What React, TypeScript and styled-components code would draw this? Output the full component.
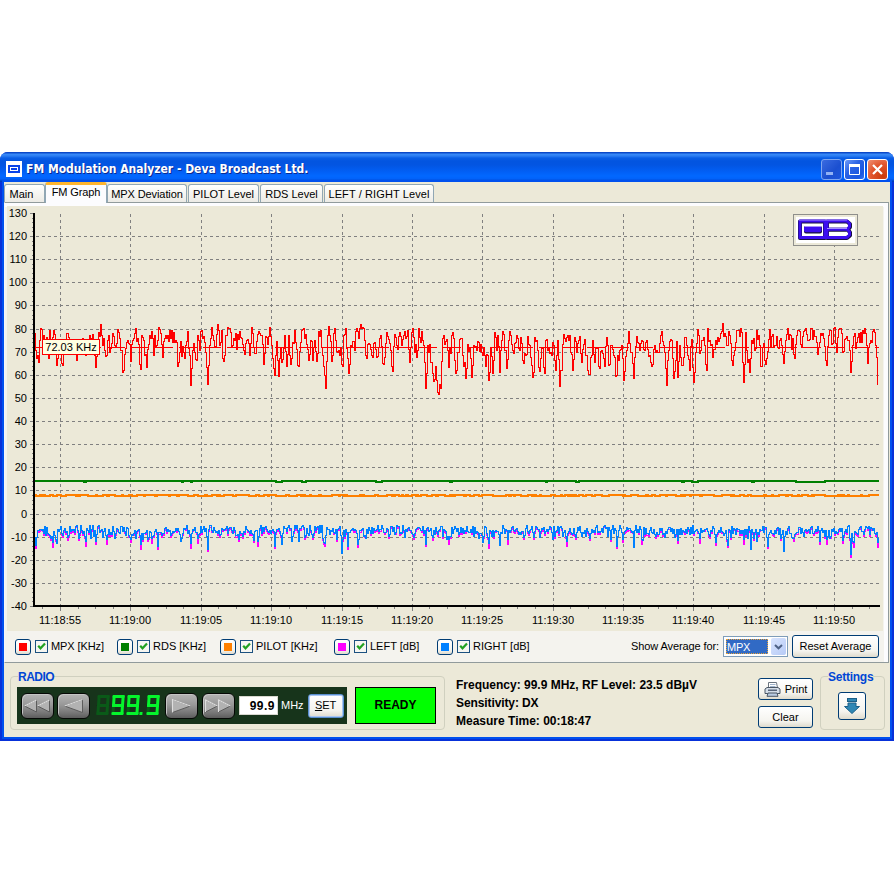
import React from "react";
import styled, { createGlobalStyle, css } from "styled-components";

const SANS = '"Liberation Sans", Arial, sans-serif';

const Global = createGlobalStyle`
  * { box-sizing: border-box; }
  body { margin: 0; background: #fff; font: 11px/13px ${SANS}; color: #000; cursor: default; }
  button { font: inherit; color: #000; padding: 0; margin: 0; }
`;

/* ---------- window frame ---------- */

const Page = styled.main`
  width: 894px;
  height: 894px;
  padding-top: 152px;
  overflow: hidden;
`;

const Window = styled.section`
  width: 894px;
  height: 589px;
  display: flex;
  flex-direction: column;
  border-radius: 8px 8px 0 0;
  overflow: hidden;
  background: #0831d9;
`;

const TitleBar = styled.header`
  height: 30px;
  flex: none;
  display: flex;
  align-items: center;
  padding: 4px 6px 0 6px;
  background: linear-gradient(
    #0a48c8 0, #0a48c8 1px, #3a8bf8 2px, #2a7cf2 4px, #0a5ee6 6px, #0355e0 9px,
    #0355e2 13px, #0260f6 20px, #0268ff 24px, #0262fa 27px, #0140c4 29px, #0038b0 30px
  );
`;

const AppIcon = styled.svg`
  display: block;
  width: 16px;
  height: 16px;
  margin-right: 4px;
`;

const Title = styled.h1`
  margin: 0;
  flex: 1;
  font: bold 12px/16px "DejaVu Sans Condensed", "DejaVu Sans", sans-serif;
  letter-spacing: 0;
  color: #fff;
  text-shadow: 1px 1px 0 #0a2a90;
  white-space: nowrap;
`;

const CaptionButtons = styled.div`
  display: flex;
  gap: 2px;
`;

const CaptionButton = styled.button<{ $kind: "dim" | "normal" | "close" }>`
  width: 21px;
  height: 21px;
  display: grid;
  place-items: center;
  border-radius: 3px;
  border: 1px solid ${(p) => (p.$kind === "dim" ? "#7fa6f0" : "#fff")};
  background: ${(p) =>
    p.$kind === "close"
      ? "radial-gradient(circle at 80% 85%, #c93a0c, #e2562f 55%, #ef9276)"
      : p.$kind === "dim"
        ? "linear-gradient(135deg, #3a6be0, #1b4fd0 60%, #1c56de)"
        : "linear-gradient(135deg, #6f9cf8, #2a62e4 40%, #1a56e0 80%, #2f76f6)"};
`;

const Client = styled.div`
  flex: 1;
  margin: 0 4px 4px;
  display: flex;
  flex-direction: column;
  background: #ece9d8;
  box-shadow: 0 0 0 2px #0050ee;
`;

/* ---------- tabs ---------- */

const TabStrip = styled.nav`
  height: 20px;
  flex: none;
  display: flex;
  align-items: flex-end;
`;

const Tab = styled.div<{ $w: number; $ls: number; $gap?: number; $active?: boolean }>`
  width: ${(p) => p.$w}px;
  height: 18px;
  margin-left: ${(p) => p.$gap || 0}px;
  padding-top: 3px;
  text-align: center;
  white-space: nowrap;
  letter-spacing: ${(p) => p.$ls}px;
  border: 1px solid #91a7b4;
  border-bottom: 0;
  border-radius: 3px 3px 0 0;
  background: linear-gradient(#fff, #f4f3ee 60%, #ecebe6);
  ${(p) =>
    p.$active &&
    css`
      height: 21px;
      margin-bottom: -1px;
      z-index: 1;
      padding-top: 1px;
      border-top: 3px solid #ffb52e;
      background: #fcfcfe;
    `}
`;

const TabPanel = styled.div`
  width: 885px;
  height: 461px;
  flex: none;
  padding: 3px 3px 0 2px;
  border: 1px solid #919b9c;
  border-left-color: #f4f6fa;
  background: #f4f3ee;
  box-shadow: inset 0 4px 0 #fcfcfe, inset -4px 0 0 #fcfcfe;
`;

/* ---------- chart ---------- */

const ChartArea = styled.div`
  position: relative;
  width: 876px;
  height: 425px;
  background: #ece9d8;
`;

const ChartSvg = styled.svg`
  display: block;
  width: 876px;
  height: 425px;
  font: 11px ${SANS};
`;

const ValueTip = styled.div`
  position: absolute;
  left: 35px;
  top: 133px;
  width: 58px;
  height: 16px;
  border: 1px solid #f00;
  background: #ffffe1;
  text-align: center;
  line-height: 15px;
  white-space: nowrap;
`;

const LogoBox = styled.div`
  position: absolute;
  left: 786px;
  top: 8px;
  width: 65px;
  height: 32px;
  border: 1px solid #8f8f8b;
  padding: 2px;
  background: #ece9d8;
`;

const LogoSvg = styled.svg`
  display: block;
  width: 59px;
  height: 26px;
  background: #fff;
`;

/* ---------- legend ---------- */

const LegendRow = styled.div`
  height: 31px;
  display: flex;
  align-items: center;
  padding-left: 8px;
`;

const LegendItem = styled.div<{ $w: number }>`
  width: ${(p) => p.$w}px;
  display: flex;
  align-items: center;
`;

const XpButton = styled.button<{ $w: number; $h: number; $ls?: number }>`
  width: ${(p) => p.$w}px;
  height: ${(p) => p.$h}px;
  flex: none;
  display: flex;
  align-items: center;
  justify-content: center;
  border: 1px solid #003c74;
  border-radius: 3px;
  background: linear-gradient(#fff, #f5f4ef 70%, #dfdbcd);
  letter-spacing: ${(p) => p.$ls || 0}px;
  white-space: nowrap;
`;

const SetButton = styled(XpButton)`
  margin-left: 4px;
  border-color: #5a8fd0;
  box-shadow: inset 0 0 0 1px #a8c6f2;
`;

const Swatch = styled.span<{ $c: string }>`
  width: 8px;
  height: 8px;
  background: ${(p) => p.$c};
`;

const CheckBox = styled.svg`
  display: block;
  width: 13px;
  height: 13px;
  margin: 0 3px 0 4px;
`;

const Label = styled.span<{ $ls?: number }>`
  letter-spacing: ${(p) => p.$ls || 0}px;
  white-space: nowrap;
`;

const AverageTools = styled.div`
  margin-left: auto;
  margin-right: 6px;
  display: flex;
  align-items: center;
`;

const Select = styled.div`
  width: 65px;
  height: 21px;
  margin: 0 4px;
  display: flex;
  align-items: stretch;
  border: 1px solid #7f9db9;
  background: #fff;
  padding: 1px;
`;

const SelectValue = styled.span`
  flex: 1;
  margin: 1px 3px 1px 1px;
  background: #316ac5;
  outline: 1px dotted #e8a33a;
  outline-offset: -1px;
  color: #fff;
  line-height: 16px;
  padding-left: 1px;
  letter-spacing: -0.2px;
`;

const SelectArrow = styled.span`
  width: 15px;
  display: grid;
  place-items: center;
  border-radius: 2px;
  background: linear-gradient(135deg, #d8e4fe, #b6caf6);
`;

/* ---------- bottom area ---------- */

const Footer = styled.div`
  flex: 1;
  display: flex;
  padding: 13px 5px 0 6px;
`;

const Group = styled.fieldset<{ $w: number }>`
  width: ${(p) => p.$w}px;
  height: 54px;
  flex: none;
  margin: 0;
  padding: 8px 0 0 6px;
  min-width: 0;
  border: 1px solid #d0d0bf;
  border-radius: 4px;
`;

const GroupTitle = styled.div<{ $ls: number }>`
  width: max-content;
  height: 12px;
  margin: -15px 0 5px 1px;
  background: #ece9d8;
  color: #0046d5;
  font-weight: bold;
  font-size: 12px;
  line-height: 14px;
  letter-spacing: ${(p) => p.$ls}px;
`;

const GroupRow = styled.div<{ $center?: boolean }>`
  display: flex;
  gap: 8px;
  ${(p) => p.$center && "padding: 5px 0 0 11px;"}
`;

const RadioPanel = styled.div`
  width: 330px;
  height: 37px;
  display: flex;
  align-items: center;
  padding-left: 4px;
  background: #17341b;
  color: #fff;
`;

const SeekButton = styled.button<{ $ml: number }>`
  width: 33px;
  height: 26px;
  flex: none;
  margin-left: ${(p) => p.$ml}px;
  padding: 0;
  display: grid;
  place-items: center;
  border: 1px solid #050805;
  border-radius: 6px;
  background: linear-gradient(#b4b4b4, #989898 45%, #757575 80%, #5c5c5c);
  box-shadow: inset 1px 1px 0 #c4c4c4;
`;

const Lcd = styled.div`
  width: 64px;
  height: 21px;
  flex: none;
  margin-left: 7px;
  display: flex;
  transform: skewX(-4deg);
`;

const Digit = styled.div<{ $mr: number }>`
  width: 12px;
  height: 20px;
  flex: none;
  margin-right: ${(p) => p.$mr}px;
  display: grid;
  grid-template-columns: 3px 1fr 3px;
  grid-template-rows: 3px 1fr 3px 1fr 3px;
`;

const Segment = styled.i<{ $area: string; $on: boolean }>`
  grid-area: ${(p) => p.$area};
  border-radius: 1px;
  background: ${(p) => (p.$on ? "#05f52c" : "#0a5a18")};
`;

const LcdDot = styled.i`
  width: 3px;
  height: 3px;
  flex: none;
  margin: 17px 4px 0 0;
  background: #05f52c;
`;

const FreqInput = styled.div`
  width: 39px;
  height: 19px;
  flex: none;
  margin: 0 3px 0 4px;
  padding-right: 2px;
  background: #fff;
  border: 1px solid #d8d8d0;
  color: #000;
  font-weight: bold;
  font-size: 12px;
  line-height: 18px;
  text-align: right;
  letter-spacing: 0.5px;
`;

const Ready = styled.div`
  width: 81px;
  height: 37px;
  border: 1px solid #000;
  background: #00ff00;
  font-weight: bold;
  font-size: 12px;
  line-height: 35px;
  text-align: center;
`;

const Info = styled.div`
  width: 313px;
  flex: none;
  padding-left: 11px;
  font-weight: bold;
  font-size: 12px;
  line-height: 18px;
`;

const InfoLine = styled.div<{ $ls: number }>`
  letter-spacing: ${(p) => p.$ls}px;
  white-space: nowrap;
`;

const ButtonStack = styled.div`
  display: flex;
  flex-direction: column;
  gap: 6px;
  padding-top: 2px;
  margin-right: 7px;
`;

const PrinterIcon = styled.svg`
  width: 17px;
  height: 16px;
  margin-right: 4px;
`;

/* ---------- series data ---------- */

type Pt = [number, number];

function noise(seed: number) {
  let s = seed;
  return () => {
    s = (s * 1664525 + 1013904223) >>> 0;
    return s / 4294967296;
  };
}

const MPX = `35,333 36,350 37,358 39,362 40,340 42,329 44,335 45,351 48,342 49,358 50,330 52,343 54,330 57,365 59,345 61,352 63,365 65,340 68,333 70,345 73,352 75,345 77,360 79,340 82,352 83,338 86,355 88,345 91,338 93,334 95,355 96,367 98,345 99,332 100,336 101,324 102,335 104,338 106,356 108,340 109,335 110,352 112,343 114,336 117,343 119,332 121,350 124,370 126,348 128,340 130,344 131,361 133,340 136,328 138,338 141,369 142,335 144,340 147,367 150,335 152,331 154,355 155,335 157,345 159,327 161,333 163,357 165,338 168,335 171,338 174,332 177,342 178,366 180,352 183,346 185,358 186,345 188,331 190,355 191,385 193,350 195,352 197,360 198,335 200,350 202,330 204,336 206,352 208,384 210,345 212,327 214,340 216,346 218,324 220,345 222,330 223,358 225,355 226,335 228,327 231,332 233,345 236,333 237,349 240,331 243,344 245,354 247,340 250,355 252,327 254,347 256,353 259,331 262,335 264,364 266,336 268,344 270,327 272,345 275,375 277,341 279,376 281,347 282,362 285,335 287,366 289,335 291,364 293,342 295,330 297,349 299,366 301,342 303,329 305,338 308,349 309,360 311,340 313,360 315,340 317,361 319,331 321,330 322,347 324,366 326,388 328,335 329,326 330,335 332,361 334,333 336,340 339,350 341,347 343,366 344,335 346,328 347,348 349,373 351,345 353,341 355,350 357,328 359,338 361,324 363,327 365,340 366,355 367,358 369,343 372,355 375,342 378,356 381,335 383,363 386,343 388,336 391,350 393,371 395,334 397,345 400,332 402,345 404,335 406,338 408,330 410,362 412,332 414,337 417,357 419,328 420,337 423,340 425,362 426,388 428,345 430,344 432,362 434,381 436,366 437,380 439,394 441,388 443,338 444,335 446,341 448,350 449,367 452,335 454,338 455,360 457,370 459,352 461,338 463,355 465,362 466,378 468,344 470,347 472,377 474,345 477,350 479,342 482,352 484,348 486,366 488,355 489,380 491,347 493,373 495,332 497,350 498,335 500,372 502,340 504,334 507,368 509,340 511,335 513,350 516,342 518,338 520,350 521,337 524,363 526,355 528,336 530,345 532,365 534,372 535,337 538,350 540,371 542,347 545,373 546,340 548,350 551,352 553,342 556,370 558,340 560,386 562,370 564,334 565,338 567,337 570,335 573,370 575,337 577,352 580,336 582,362 584,344 587,355 590,374 593,340 595,362 597,348 600,368 602,350 605,366 607,337 609,365 611,345 614,355 617,375 618,355 622,345 624,380 627,350 629,331 631,352 634,378 637,336 640,350 642,340 645,350 647,340 650,355 652,366 655,345 657,350 659,352 661,335 664,345 666,368 667,385 669,350 672,340 674,378 677,341 678,377 680,345 683,365 685,337 687,345 690,370 692,339 694,382 696,352 698,329 700,353 703,340 705,345 707,370 708,328 710,340 713,357 716,340 719,341 721,333 723,323 725,333 728,345 730,335 732,360 735,350 738,330 740,336 742,332 744,382 746,332 748,362 750,372 752,340 755,350 757,330 760,345 761,366 764,343 765,360 769,339 772,336 775,345 780,340 784,363 786,340 788,328 791,335 795,358 797,335 798,330 802,347 804,331 807,334 810,339 814,330 818,354 820,342 823,333 825,346 827,365 829,335 831,330 833,343 835,327 837,352 839,329 841,328 843,352 846,338 849,340 851,372 854,336 857,342 860,342 863,330 865,328 868,363 871,340 875,332 876,345 878,384`
  .split(" ")
  .map((p) => p.split(",").map(Number) as Pt);

/* One vertical run per pixel column, each joining the previous level. */
function columns(levels: number[]): string {
  let d = "";
  for (let i = 1; i < levels.length; i++) {
    const a = levels[i - 1];
    const b = levels[i];
    const x = 35.5 + i - 1;
    d += b >= a ? `M${x} ${a}V${b + 1}` : `M${x} ${b}V${a + 1}`;
  }
  return d;
}

function densify(points: Pt[], seed: number, amp: number): string {
  const rnd = noise(seed);
  const out: number[] = [];
  for (let i = 0; i < points.length - 1; i++) {
    const [x0, y0] = points[i];
    const [x1, y1] = points[i + 1];
    out.push(y0);
    for (let x = x0 + 1; x < x1; x++) {
      const t = (x - x0) / (x1 - x0);
      const y = y0 + (y1 - y0) * t + (rnd() - 0.5) * amp;
      out.push(Math.round(Math.max(y, 328)));
    }
  }
  out.push(points[points.length - 1][1]);
  return columns(out);
}

const DIPS: Pt[] = [
  [36, 545], [51, 538], [53, 542], [57, 543], [68, 537], [79, 538], [86, 541], [96, 541], [107, 539], [115, 538], [131, 539],
  [141, 544], [152, 538], [158, 546], [181, 541], [191, 543], [198, 538], [208, 549], [236, 535], [254, 540], [258, 541],
  [275, 546], [282, 544], [292, 541], [299, 541], [313, 537], [325, 543], [342, 553], [348, 546], [358, 544], [366, 538],
  [414, 537], [426, 544], [433, 537], [449, 539], [483, 542], [489, 543], [500, 545], [508, 539], [524, 537], [540, 537],
  [567, 541], [576, 537], [590, 538], [611, 539], [617, 546], [623, 539], [634, 547], [642, 539], [665, 537], [678, 540],
  [700, 538], [716, 542], [728, 545], [744, 539], [751, 549], [757, 541], [768, 546], [784, 551], [794, 538], [820, 541],
  [827, 539], [843, 540], [851, 554], [854, 542], [878, 542],
];

function audioLevels(): { right: number[]; left: number[] } {
  const rnd = noise(4242);
  const dips = new Map(DIPS);
  const right: number[] = [];
  const left: number[] = [];
  for (let x = 35; x <= 879; x++) {
    let y = 529.5 + Math.sin(x / 17) * 0.7 + (rnd() - 0.5) * 9;
    if (rnd() > 0.85) y += 3 + rnd() * 3;
    if (dips.has(x)) y = dips.get(x)!;
    else if (dips.has(x + 1) || dips.has(x - 1)) y += 3;
    const level = Math.round(Math.max(y, 525));
    right.push(level);
    left.push(level + (rnd() > 0.5 ? 2 : 0) + (dips.has(x) && rnd() > 0.55 ? 3 : 0));
  }
  return { right, left };
}

const AUDIO = audioLevels();

function steps(y: number, lows: [number, number][]): string {
  let d = `M35 ${y}`;
  lows.forEach(([a, b]) => {
    d += `H${a}V${y + 1}H${b}V${y}`;
  });
  return d + "H879";
}

function pilotSteps(): string {
  const rnd = noise(77);
  let d = "M35 495";
  let x = 35;
  let low = false;
  while (x < 866) {
    x += 1 + Math.floor(rnd() * rnd() * 14);
    low = !low;
    d += `H${x}V${low ? 496 : 495}`;
  }
  return d + "H879";
}

const RDS_LOWS: [number, number][] = [
  [84, 86], [182, 183], [191, 192], [276, 282], [302, 306], [376, 382], [450, 452], [546, 547], [576, 579], [682, 684], [692, 698], [752, 754], [796, 825],
];

const Y_TICKS = [213, 236, 259, 282, 305, 329, 352, 375, 398, 421, 444, 467, 490, 514, 537, 560, 583, 606];
const X_TICKS = [60, 130, 201, 271, 342, 412, 482, 553, 623, 693, 764, 834];
const X_LABELS = ["11:18:55", "11:19:00", "11:19:05", "11:19:10", "11:19:15", "11:19:20", "11:19:25", "11:19:30", "11:19:35", "11:19:40", "11:19:45", "11:19:50"];

function Chart() {
  const minorY: number[] = [];
  for (let i = 0; i < 17; i++) for (let k = 1; k < 5; k++) minorY.push(Math.round(213 + i * 23.12 + k * 4.62));
  const minorX: number[] = [];
  for (let i = -1; i < 12; i++) for (let k = 1; k < 4; k++) {
    const x = Math.round(60 + i * 70.36 + k * 17.6);
    if (x > 37 && x < 878) minorX.push(x);
  }
  return (
    <ChartSvg viewBox="7 206 876 425">
      <g shapeRendering="crispEdges" fill="none">
        <g stroke="#808080" strokeDasharray="3 3">
          {Y_TICKS.slice(1, -1).map((y) => <path key={y} d={`M36 ${y + 0.5}H879`} />)}
          {X_TICKS.map((x) => <path key={x} d={`M${x + 0.5} 214V605`} />)}
        </g>
        <g stroke="#808080">
          {Y_TICKS.map((y) => <path key={y} d={`M30 ${y + 0.5}H34`} />)}
          {minorY.map((y) => <path key={y} d={`M32 ${y + 0.5}H34`} />)}
          {X_TICKS.map((x) => <path key={x} d={`M${x + 0.5} 607V611`} />)}
          {minorX.map((x) => <path key={x} d={`M${x + 0.5} 607V609`} />)}
        </g>
        <path d="M34 213V607M33 606H880" stroke="#000" strokeWidth="2" />
        <path d={steps(481, RDS_LOWS)} stroke="#008000" strokeWidth="2" />
        <path d={pilotSteps()} stroke="#ff8000" strokeWidth="2" />
        <path d={columns(AUDIO.left)} stroke="#ff00ff" />
        <path d={columns(AUDIO.right)} stroke="#0080ff" />
        <path d="M35 347.5H879" stroke="#f00" strokeDasharray="18 6" />
        <path d={densify(MPX, 19, 18)} stroke="#f00" />
      </g>
      <g fill="#000">
        {Y_TICKS.map((y, i) => <text key={y} x="27" y={y + 4} textAnchor="end">{130 - i * 10}</text>)}
        {X_TICKS.map((x, i) => <text key={x} x={x} y="624" textAnchor="middle" textLength="42">{X_LABELS[i]}</text>)}
      </g>
    </ChartSvg>
  );
}

function Logo() {
  return (
    <LogoSvg viewBox="0 0 59 26">
      <g fill="none" strokeLinejoin="round">
        <path d="M4 4.5H29V21H4ZM31 4.5H51L54 7V10L52 12.8L54 15.5V18.5L51 21H31ZM31 12.8H52" stroke="#17103c" strokeWidth="4" />
        <path d="M4 4H29V20.5H4ZM31 4H51L53.5 6.5V9.7L51.5 12.3L53.5 15V18L51 20.5H31ZM31 12.3H51" stroke="#3c0cf0" strokeWidth="3" />
        <path d="M3 3H51M31 11.5H51" stroke="#a48cff" strokeWidth="1" />
      </g>
      <rect x="8" y="9" width="18" height="7.5" rx="2" fill="#17103c" />
      <rect x="8" y="9" width="17.5" height="6.3" rx="2" fill="#3c0cf0" />
      <path d="M9 9.5H25" stroke="#a48cff" />
    </LogoSvg>
  );
}

const Check = () => (
  <CheckBox viewBox="0 0 13 13">
    <rect x="0.5" y="0.5" width="12" height="12" fill="#f6f6f2" stroke="#1c5180" />
    <path d="M3.2 5.8L5.5 8.3L10 3.6" fill="none" stroke="#21a121" strokeWidth="2.2" />
  </CheckBox>
);

function Seek({ dir, double, ml }: { dir: 1 | -1; double?: boolean; ml: number }) {
  const offsets = double ? [-7, 6] : [0];
  const half = double ? 6 : 9;
  const h = double ? 6 : 6.5;
  return (
    <SeekButton $ml={ml}>
      <svg width="29" height="16" viewBox="-14.5 -8 29 16">
        {offsets.map((o) => (
          <g key={o}>
            <path d={`M${o - dir * half} ${-h}L${o + dir * half} 0L${o - dir * half} ${h}Z`} fill="#b2b2b2" stroke="#5c5c5c" strokeWidth="1" />
            <path d={dir > 0 ? `M${o - half} ${h}V${-h}L${o + half} 0` : `M${o - half} 0L${o + half} ${-h}`} fill="none" stroke="#dedede" strokeWidth="1.1" />
          </g>
        ))}
      </svg>
    </SeekButton>
  );
}

const SEGMENTS: [string, string][] = [
  ["a", "1 / 1 / 2 / 4"], ["f", "1 / 1 / 4 / 2"], ["b", "1 / 3 / 4 / 4"], ["g", "3 / 1 / 4 / 4"],
  ["c", "3 / 3 / 6 / 4"], ["e", "3 / 1 / 6 / 2"], ["d", "5 / 1 / 6 / 4"],
];

function LcdDigit({ lit, mr }: { lit: string; mr: number }) {
  const ordered = [...SEGMENTS].sort((p, q) => Number(lit.includes(p[0])) - Number(lit.includes(q[0])));
  return (
    <Digit $mr={mr}>
      {ordered.map(([id, area]) => <Segment key={id} $area={area} $on={lit.includes(id)} />)}
    </Digit>
  );
}

const LEGEND = [
  { label: "MPX [KHz]", color: "#ff0000", w: 102, ls: -0.1 },
  { label: "RDS [KHz]", color: "#008000", w: 103, ls: 0 },
  { label: "PILOT [KHz]", color: "#ff8000", w: 114, ls: 0 },
  { label: "LEFT [dB]", color: "#ff00ff", w: 103, ls: 0 },
  { label: "RIGHT [dB]", color: "#0080ff", w: 100, ls: 0 },
];

export default function App() {
  return (
    <Page>
      <Global />
      <Window>
        <TitleBar>
          <AppIcon viewBox="0 0 16 16" shapeRendering="crispEdges">
            <rect width="16" height="16" fill="#fff" />
            <rect x="2" y="4" width="12" height="8" fill="#0a44e8" />
            <rect x="4" y="6" width="8" height="4" fill="#fff" />
            <rect x="5" y="7" width="6" height="2" fill="#0a44e8" />
          </AppIcon>
          <Title>FM Modulation Analyzer - Deva Broadcast Ltd.</Title>
          <CaptionButtons>
            <CaptionButton $kind="dim">
              <svg width="19" height="19"><rect x="4" y="12" width="7" height="3" fill="#92b2f4" /></svg>
            </CaptionButton>
            <CaptionButton $kind="normal">
              <svg width="19" height="19"><path d="M4 5.5H15M4.5 5V14.5H14.5V5" fill="none" stroke="#fff" /><rect x="4" y="4" width="11" height="3" fill="#fff" /></svg>
            </CaptionButton>
            <CaptionButton $kind="close">
              <svg width="19" height="19"><path d="M5 5L14 14M14 5L5 14" stroke="#fff" strokeWidth="2.2" /></svg>
            </CaptionButton>
          </CaptionButtons>
        </TitleBar>

        <Client>
          <TabStrip>
            <Tab $w={41} $ls={0}>Main&nbsp;&nbsp;</Tab>
            <Tab $w={62} $ls={-0.1} $active>FM Graph</Tab>
            <Tab $w={80} $ls={-0.1}>MPX Deviation</Tab>
            <Tab $w={71} $gap={1} $ls={0}>PILOT Level</Tab>
            <Tab $w={63} $gap={1} $ls={0}>RDS Level</Tab>
            <Tab $w={110} $gap={1} $ls={0.1}>LEFT / RIGHT Level</Tab>
          </TabStrip>

          <TabPanel>
            <ChartArea>
              <Chart />
              <ValueTip>72.03 KHz</ValueTip>
              <LogoBox><Logo /></LogoBox>
            </ChartArea>
            <LegendRow>
              {LEGEND.map((s) => (
                <LegendItem key={s.label} $w={s.w}>
                  <XpButton $w={16} $h={16}><Swatch $c={s.color} /></XpButton>
                  <Check />
                  <Label $ls={s.ls}>{s.label}</Label>
                </LegendItem>
              ))}
              <AverageTools>
                <Label $ls={-0.1}>Show Average for:</Label>
                <Select>
                  <SelectValue>MPX</SelectValue>
                  <SelectArrow>
                    <svg width="9" height="6"><path d="M1 1L4.5 4.3L8 1" fill="none" stroke="#4d6185" strokeWidth="2" /></svg>
                  </SelectArrow>
                </Select>
                <XpButton $w={87} $h={23}>Reset Average</XpButton>
              </AverageTools>
            </LegendRow>
          </TabPanel>

          <Footer>
            <Group $w={435}>
              <GroupTitle $ls={-0.5}>RADIO</GroupTitle>
              <GroupRow>
                <RadioPanel>
                  <Seek dir={-1} double ml={0} />
                  <Seek dir={-1} ml={3} />
                  <Lcd aria-label="99.9">
                    <LcdDigit lit="" mr={3} />
                    <LcdDigit lit="abcdfg" mr={3} />
                    <LcdDigit lit="abcdfg" mr={1} />
                    <LcdDot />
                    <LcdDigit lit="abcdfg" mr={0} />
                  </Lcd>
                  <Seek dir={1} ml={4} />
                  <Seek dir={1} double ml={4} />
                  <FreqInput>99.9</FreqInput>
                  <Label>MHz</Label>
                  <SetButton $w={36} $h={24}>
                    <Label><u>S</u>ET</Label>
                  </SetButton>
                </RadioPanel>
                <Ready>READY</Ready>
              </GroupRow>
            </Group>
            <Info>
              <InfoLine $ls={0}>Frequency: 99.9 MHz, RF Level: 23.5 dBµV</InfoLine>
              <InfoLine $ls={-0.1}>Sensitivity: DX</InfoLine>
              <InfoLine $ls={0}>Measure Time: 00:18:47</InfoLine>
            </Info>
            <ButtonStack>
              <XpButton $w={55} $h={22}>
                <PrinterIcon viewBox="0 0 17 16">
                  <path d="M4.5 7V1.5H12.5L13.5 7" fill="#fff" stroke="#6a7480" />
                  <path d="M6 3.5H11.5M6 5.5H11.5" stroke="#9fb4cc" />
                  <path d="M1 8L3 6.5H14L16 8V12.5H1Z" fill="#d4dde8" stroke="#4a5664" />
                  <path d="M4 8.5H13V10H4Z" fill="#58657a" />
                  <path d="M4 12H13L14 15.3H3Z" fill="#b9cbe2" stroke="#4a5664" />
                </PrinterIcon>
                Print
              </XpButton>
              <XpButton $w={55} $h={22}>Clear</XpButton>
            </ButtonStack>
            <Group $w={65}>
              <GroupTitle $ls={-0.25}>Settings</GroupTitle>
              <GroupRow $center>
                <XpButton $w={28} $h={28}>
                  <svg width="18" height="18" viewBox="0 0 18 18">
                    <rect x="4.5" y="1.5" width="9" height="3" fill="#2f87b4" stroke="#1b5f88" />
                    <path d="M5 6H13V9.5H16.5L9 16.5L1.5 9.5H5Z" fill="#2f87b4" stroke="#1b5f88" />
                  </svg>
                </XpButton>
              </GroupRow>
            </Group>
          </Footer>
        </Client>
      </Window>
    </Page>
  );
}
